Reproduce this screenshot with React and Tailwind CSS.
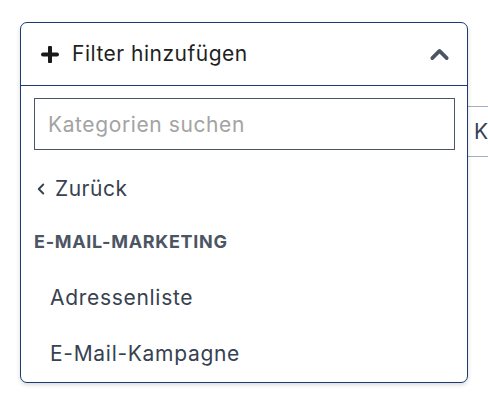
import { ChevronUp, ChevronLeft } from 'lucide-react';

const kategorien = ['Adressenliste', 'E-Mail-Kampagne'];

export default function App() {
  return (
    <div className="relative w-[488px] h-[404px] bg-white overflow-hidden" style={{ fontFamily: 'Inter, "Noto Sans", sans-serif' }}>
      {/* Feld hinter dem Dropdown */}
      <div className="absolute left-[440px] top-[106px] w-[120px] h-[51px] border border-[#a3afc4] flex items-center pl-[33px] text-[21px] text-[#374151]">
        K
      </div>

      <div className="relative z-10 ml-[20px] mt-[22px] w-[448px] h-[361px] bg-white border border-[#1d3b72] rounded-[7px] shadow-[0_2px_4px_rgba(0,0,0,0.15)] flex flex-col">
        <div className="h-[63px] shrink-0 border-b border-[#1d3b72] flex items-center pl-[20px] pr-[13px]">
          <svg width="18" height="17" viewBox="0 0 18 17" className="text-[#1a1a1a]">
            <path d="M9 1.5v14M2 8.5h14" stroke="currentColor" strokeWidth="4" strokeLinecap="round" />
          </svg>
          <span className="ml-[13px] text-[21px] tracking-[0.5px] text-[#1f1f1f]">Filter hinzufügen</span>
          <ChevronUp size={29} strokeWidth={3} className="ml-auto text-[#4b5563]" />
        </div>

        <div className="px-[13px] pt-[12px]">
          <input
            type="text"
            placeholder="Kategorien suchen"
            className="w-[421px] h-[52px] border border-[#4b5563] px-[13px] text-[21px] tracking-[0.6px] text-[#374151] placeholder:text-[#a3a3a3] outline-none"
          />
        </div>

        <button className="flex items-center h-[26px] mt-[26px] ml-[11px] text-[21px] tracking-[0.5px] text-[#374151]">
          <ChevronLeft size={18} strokeWidth={2.5} />
          <span className="ml-[5px]">Zurück</span>
        </button>

        <div className="mt-[26px] ml-[13px] h-[26px] flex items-center text-[18px] font-bold tracking-[0.7px] text-[#4b5563]">
          E-MAIL-MARKETING
        </div>

        <ul className="mt-[16px]">
          {kategorien.map((k) => (
            <li key={k} className="h-[56px] flex items-center pl-[29px] text-[21px] tracking-[0.7px] text-[#374151]">
              {k}
            </li>
          ))}
        </ul>
      </div>
    </div>
  );
}
